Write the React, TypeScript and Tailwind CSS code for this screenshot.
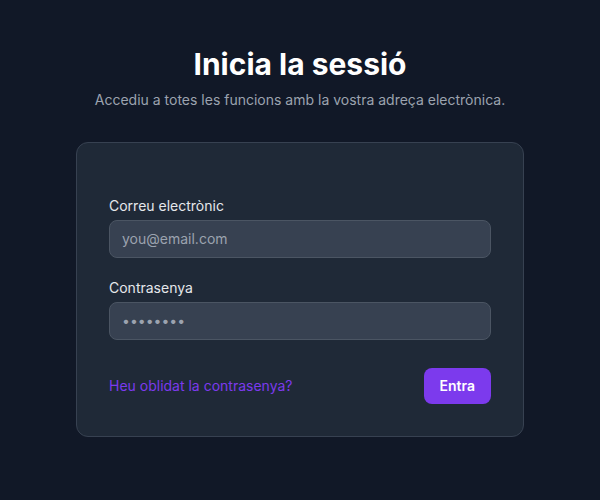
export default function App() {
  return (
    <div
      className="min-h-screen bg-[#111827] pt-[46px] px-4"
      style={{ fontFamily: 'Inter, "Noto Sans", sans-serif' }}
    >
      <div className="mx-auto w-[448px]">
        <h1 className="text-center text-3xl font-bold text-white">Inicia la sessió</h1>
        <p className="mt-2 text-center text-sm text-[#9ca3af]">
          Accediu a totes les funcions amb la vostra adreça electrònica.
        </p>

        <form
          className="mt-8 rounded-xl border border-[#374151] bg-[#1f2937] px-8 pb-8 pt-[53px]"
          onSubmit={(e) => e.preventDefault()}
        >
          <div className="space-y-5">
            <div>
              <label className="block text-sm text-[#e5e7eb]">Correu electrònic</label>
              <input
                type="email"
                placeholder="you@email.com"
                className="mt-1 block w-full rounded-lg border border-[#4b5563] bg-[#374151] px-3 py-2 text-sm text-gray-100 placeholder-[#9ca3af] outline-none"
              />
            </div>
            <div>
              <label className="block text-sm text-[#e5e7eb]">Contrasenya</label>
              <input
                type="password"
                defaultValue="12345678"
                className="mt-1 block w-full rounded-lg border border-[#4b5563] bg-[#374151] px-3 py-2 text-sm text-[#9ca3af] outline-none"
              />
            </div>
          </div>

          <div className="mt-7 flex items-center justify-between">
            <a href="#" className="text-sm text-[#7c3aed]">Heu oblidat la contrasenya?</a>
            <button
              type="submit"
              className="rounded-lg bg-[#7c3aed] px-4 py-2 text-sm font-semibold text-white"
            >
              Entra
            </button>
          </div>
        </form>
      </div>
    </div>
  );
}
